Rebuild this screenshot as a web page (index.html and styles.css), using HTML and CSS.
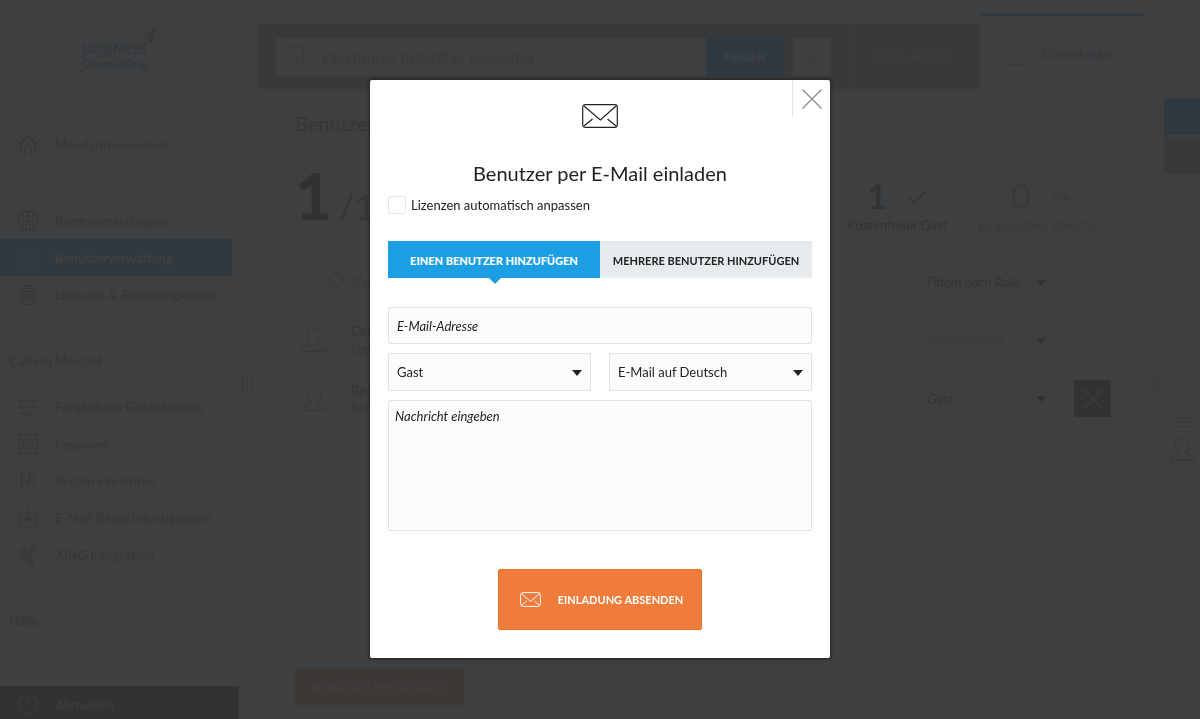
FILE: index.html
```html
<!DOCTYPE html>
<html lang="de">
<head>
    <meta charset="UTF-8">
    <meta name="viewport" content="width=device-width, initial-scale=1.0">
    <title>Benutzerverwaltung</title>
    <link rel="stylesheet" href="styles.css">
</head>
<body>
    <!-- Shared icons -->
    <svg class="sprite" width="0" height="0">
        <symbol id="user" viewBox="0 0 26 26">
            <path d="M10 16.500c-2-1.500-3.500-4.500-3.500-8C6.500 4 9 1.500 13 1.500S19.500 4 19.500 8.500c0 3.500-1.500 6.500-3.500 8 1 2 3.500 2.500 6 3.500 2 .8 3 2.200 2.500 3.500-1.500 1.200-21.500 1.200-23 0C1 22.200 2 20.800 4 20c2.500-1 5-1.500 6-3.500z"/>
        </symbol>
        <symbol id="cross" viewBox="0 0 20 20">
            <path d="M.5.5l19 19M19.500.5l-19 19"/>
        </symbol>
        <symbol id="mail" viewBox="0 0 36 24">
            <rect x=".7" y=".7" width="34.600" height="22.600" rx="2.500"/>
            <path d="M2 2l16.300 14L34 2M2 22l8.500-7M34 22l-8.500-7"/>
        </symbol>
        <symbol id="mail-small" viewBox="0 0 21 15">
            <rect x=".6" y=".6" width="19.800" height="13.800" rx="2.500"/>
            <path d="M2 2l8.500 7.500L19 2M2 13l4.500-4M19 13l-4.500-4"/>
        </symbol>
    </svg>

    <div class="page">
        <aside class="sidebar">
            <div class="logo">
                <svg class="logo-arrow" viewBox="0 0 82 48" width="82" height="48">
                    <path class="line" d="M1 45L26 26l27 8L72 10"/>
                    <path class="head" d="M79 1L66 7l5 2 3 6z"/>
                </svg>
                <span>BUSINESS</span>
                <span>Consulting</span>
            </div>

            <nav class="menu menu-wide">
                <a href="#"><svg viewBox="0 0 20 20"><path d="M.5 9.500L10 1l9.500 8.500M3 8v11h4v-8h6v8h4V8"/></svg>Mandantenwechsel</a>
            </nav>

            <nav class="menu">
                <a href="#"><svg viewBox="0 0 20 20"><path d="M.7.700h18.600v18.600H.7zM1 10h18M8 19v-6h4v6"/><path class="thick" d="M4.500 3v4M10 3v4M15.500 3v4M4.500 12.500v4M15.500 12.500v4"/></svg>Kontoeinstellungen</a>
                <a href="#" class="active"><svg><use href="#user"/></svg>Benutzerverwaltung</a>
                <a href="#"><svg viewBox="0 0 20 20"><rect x="4" y=".7" width="12" height="18.600" rx="1.500"/><path d="M4 6.500h12M6 3.500h8M7 9h6v7H7zM10 9v7"/></svg>Lizenzen &amp; Rechnungsdaten</a>
            </nav>

            <h2>Cathrin Mentzel</h2>

            <nav class="menu">
                <a href="#"><svg viewBox="0 0 20 20"><path d="M0 4h12M16 4h4M0 10h3M7 10h13M0 16h7M12 16h8"/><circle cx="14" cy="4" r="2"/><circle cx="5" cy="10" r="2"/><circle cx="9.500" cy="16" r="2"/></svg>Persönliche Einstellungen</a>
                <a href="#"><svg viewBox="0 0 20 20"><path d="M.7.700h18.600v18.600H.7zM17 4v3M17 9v3M17 14v3"/><circle cx="9.500" cy="10" r="5"/><circle cx="9.500" cy="10" r="2"/><path d="M4 10h4"/></svg>Passwort</a>
                <a href="#"><svg viewBox="0 0 20 20"><path d="M3.500 20V1h8v10h-8M11.500 3H16v10H9.500l-1-2"/></svg>Regeln einrichten</a>
                <a href="#"><svg viewBox="0 0 20 20"><path d="M8 5H2.500Q.7 5 .7 7v10q0 2 2 2h14.600q2 0 2-2V7q0-2-2-2H12M10 0v11M7.500 9l2.500 2.500L12.500 9M2 6l8 7 8-7M2 18l5-5M18 18l-5-5"/></svg>E-Mail Benachrichtigungen</a>
                <a href="#"><svg viewBox="0 0 20 20"><path d="M3 4h3.500l2 4-4 6H1.500l3.500-6zM14.500 1H18l-6.500 11 4 7.500H12L8 12z"/></svg>XING Integration</a>
            </nav>

            <h2>Hilfe</h2>

            <a href="#" class="logout"><svg viewBox="0 0 20 20"><path d="M10 0v12M6.500 1.500a9.200 9.200 0 1 0 7 0"/></svg>Abmelden</a>
        </aside>

        <div class="handle"></div>

        <main class="main">
            <header class="topbar">
                <form class="search">
                    <label class="search-field">
                        <svg viewBox="0 0 14 22" width="14" height="22"><path d="M.7.700h12.600v20L7 15.500l-6.300 5z"/></svg>
                        <input type="text" placeholder="Durchsuche BUSINESS Consulting" aria-label="Suche">
                    </label>
                    <button type="button" class="find">FINDEN</button>
                    <button type="button" class="filter" aria-label="Filter"><svg viewBox="0 0 20 20" width="20" height="20"><path d="M1 1h18l-7 8v7l-4 3.500V9z"/></svg></button>
                </form>
                <a href="#" class="import"><svg viewBox="0 0 26 22" width="26" height="22"><path d="M10 16H5.500a4.500 4.500 0 0 1-.5-9 4 4 0 0 1 3.500-2.500A6.500 6.500 0 0 1 20 6.500 5 5 0 0 1 20.500 16H16M13 22V9M10 12l3-3.500 3 3.500"/></svg>Import</a>
                <a href="#" class="settings"><svg width="24" height="24"><use href="#user"/></svg>Einstellungen</a>
            </header>

            <section class="content">
                <h1>Benutzerverwaltung</h1>

                <div class="stats">
                    <div class="licenses"><strong>1</strong><span>/10</span></div>
                    <div class="stat">
                        <div class="stat-value"><b>1</b><svg viewBox="0 0 20 20" width="20" height="20"><path d="M1 11l6 6L19 5"/></svg></div>
                        Kostenfreier Gast
                    </div>
                    <div class="stat stat-light">
                        <div class="stat-value"><span>0</span><svg viewBox="0 0 20 20" width="20" height="20"><path d="M8 3L1 9l7 6v-4c5-.5 8 2 11 6 0-6-5-10-11-10z"/></svg></div>
                        Eingeladene Benutzer
                    </div>
                </div>

                <div class="row row-filter">
                    <label class="user-search">
                        <svg viewBox="0 0 20 20" width="20" height="20"><circle cx="12.500" cy="7.500" r="6.500"/><path d="M8 12l-7.500 7.500"/></svg>
                        <input type="text" placeholder="Nach Benutzer suchen" aria-label="Benutzer suchen">
                    </label>
                    <div class="dropdown dim-dropdown">
                        <select class="italic" aria-label="Rolle filtern"><option>Filtern nach Rolle</option></select>
                    </div>
                </div>

                <div class="row">
                    <svg class="avatar"><use href="#user"/></svg>
                    <div class="person"><b>Cathrin Mentzel</b><span>cathrin.mentzel</span></div>
                    <div class="dropdown dim-dropdown locked">
                        <select aria-label="Rolle"><option>Administrator</option></select>
                    </div>
                </div>

                <div class="row row-last">
                    <svg class="avatar"><use href="#user"/></svg>
                    <div class="person"><b>Benutzer</b><span>benutzer</span></div>
                    <div class="dropdown dim-dropdown">
                        <select aria-label="Rolle"><option>Gast</option></select>
                    </div>
                    <button type="button" class="remove" aria-label="Entfernen"><svg width="20" height="20"><use href="#cross"/></svg></button>
                </div>

                <footer class="content-footer">
                    <button type="button" class="add-user">BENUTZER HINZUFÜGEN</button>
                </footer>
            </section>
        </main>

        <div class="handle"></div>

        <aside class="rail">
            <div class="rail-box rail-blue"></div>
            <div class="rail-box rail-grey"></div>
            <div class="rail-handle"></div>
            <div class="rail-user"><svg width="26" height="26"><use href="#user"/></svg></div>
        </aside>
    </div>

    <div class="overlay">
        <form class="modal">
            <button type="button" class="close" aria-label="Schließen"><svg width="20" height="20"><use href="#cross"/></svg></button>
            <svg class="modal-icon" width="36" height="24"><use href="#mail"/></svg>
            <h2>Benutzer per E-Mail einladen</h2>
            <label class="check"><input type="checkbox">Lizenzen automatisch anpassen</label>

            <div class="tabs">
                <button type="button" class="tab tab-active">EINEN BENUTZER HINZUFÜGEN</button>
                <button type="button" class="tab">MEHRERE BENUTZER HINZUFÜGEN</button>
            </div>

            <div class="fields">
                <input class="field" type="email" placeholder="E-Mail-Adresse" aria-label="E-Mail-Adresse">
                <div class="field-row">
                    <div class="dropdown">
                        <select class="field" aria-label="Rolle"><option>Gast</option></select>
                    </div>
                    <div class="dropdown">
                        <select class="field" aria-label="Sprache"><option>E-Mail auf Deutsch</option></select>
                    </div>
                </div>
                <textarea class="field message" placeholder="Nachricht eingeben" aria-label="Nachricht"></textarea>
            </div>

            <button type="button" class="send"><svg width="21" height="15"><use href="#mail-small"/></svg>EINLADUNG ABSENDEN</button>
        </form>
    </div>
</body>
</html>
```
FILE: styles.css
```css
* {
    box-sizing: border-box;
}

body {
    margin: 0;
    font-family: Lato, "Liberation Sans", sans-serif;
    font-size: 13px;
    line-height: 18px;
    color: #222;
    background: #f0f0f0;
    overflow: hidden;
}

h1,
h2 {
    margin: 0;
    font-weight: normal;
}

a {
    color: inherit;
    text-decoration: none;
}

button,
input,
select,
textarea {
    font: inherit;
    color: inherit;
    border: none;
    border-radius: 0;
    background: none;
    padding: 0;
    margin: 0;
}

button {
    cursor: pointer;
}

svg {
    fill: none;
    stroke: currentColor;
    stroke-width: 1.2;
    flex-shrink: 0;
}

.sprite {
    position: absolute;
}

.page {
    display: flex;
    height: 100vh;
}

/* Sidebar */
.sidebar {
    display: flex;
    flex-direction: column;
    width: 239px;
    color: #888;
}

.logo {
    position: relative;
    display: flex;
    flex-direction: column;
    height: 126px;
    padding: 41px 0 0 82px;
    font-size: 14px;
    line-height: 15px;
    color: #4a8c98;
}

.logo-arrow {
    position: absolute;
    left: 77px;
    top: 28px;
    color: #888;
}

.logo-arrow .head {
    fill: currentColor;
}

.menu {
    width: 232px;
    background: #fff;
}

.menu-wide {
    width: auto;
    margin-bottom: 39px;
}

.menu a,
.logout {
    display: flex;
    align-items: center;
    gap: 17px;
    height: 37px;
    padding-left: 18px;
    font-weight: bold;
}

.menu svg,
.logout svg {
    width: 20px;
    height: 20px;
    color: #666;
}

.menu .thick {
    stroke-width: 2.5;
}

.menu .active {
    background: #1c9fe2;
    color: #fff;
}

.menu .active svg {
    color: #ccc;
}

.sidebar h2 {
    padding: 39px 9px 18px;
    font-size: 13px;
    font-weight: bold;
}

.logout {
    height: 33px;
    margin-top: auto;
    padding-top: 4px;
    background: #222;
    color: #aaa;
}

.logout svg {
    color: #aaa;
}

/* Drag handles between the columns */
.handle {
    width: 19px;
    height: 26px;
    margin-top: 370px;
    background: repeating-linear-gradient(to right, #aaa 0 1px, transparent 1px 4px) 4px 0 / 9px 100% no-repeat;
}

/* Main column */
.main {
    display: flex;
    flex-direction: column;
    flex: 1;
    padding-top: 14px;
}

.topbar {
    display: flex;
    align-items: flex-end;
    height: 75px;
}

.search {
    display: flex;
    flex: 1;
    height: 65px;
    padding: 14px 19px 13px 18px;
    background: #949698;
}

.search-field {
    display: flex;
    align-items: center;
    flex: 1;
    gap: 19px;
    padding-left: 14px;
    background: #fff;
    color: #999;
}

.search-field input {
    flex: 1;
    min-width: 0;
    font-size: 15px;
}

input::placeholder,
textarea::placeholder {
    color: inherit;
    font-style: italic;
    opacity: 1;
}

.find {
    width: 78px;
    background: #1c9fe2;
    color: #fff;
    font-size: 11px;
    font-weight: bold;
}

.filter {
    display: flex;
    align-items: center;
    justify-content: center;
    width: 38px;
    margin-left: 9px;
    background: #fff;
    color: #999;
}

.import {
    display: flex;
    align-items: center;
    gap: 9px;
    width: 129px;
    height: 65px;
    margin-left: 1px;
    padding-left: 24px;
    background: #949698;
    color: #ddd;
    font-weight: bold;
}

.settings {
    display: flex;
    align-items: center;
    gap: 13px;
    width: 165px;
    height: 75px;
    padding: 3px 0 0 24px;
    border-top: 2px solid #1c9fe2;
    background: #fff;
    color: #888;
}

.content {
    display: flex;
    flex-direction: column;
    flex: 1;
    padding: 0 13px 14px 18px;
    background: #fff;
}

.content h1 {
    padding: 22px 19px 18px;
    border-bottom: 1px solid #eee;
    font-size: 20px;
    line-height: 24px;
    color: #666;
}

.stats {
    display: flex;
    height: 94px;
    padding-right: 29px;
}

.licenses {
    flex: 1;
    padding: 10px 19px;
    font-size: 36px;
    line-height: 64px;
    color: #666;
}

.licenses strong {
    margin-right: 6px;
    font-size: 64px;
    font-weight: 900;
    color: #222;
}

.stat {
    margin-top: 22px;
    margin-left: 32px;
    text-align: center;
    color: #333;
}

.stat-light {
    color: #999;
}

.stat-value {
    display: flex;
    align-items: center;
    justify-content: center;
    gap: 20px;
    height: 40px;
    font-size: 34px;
}

.row {
    display: flex;
    align-items: center;
    height: 57px;
    padding: 0 21px 0 25px;
    border-top: 1px solid #eee;
}

.row-filter {
    height: 63px;
    padding-top: 4px;
    padding-left: 37px;
}

.row-last {
    height: 60px;
}

.user-search {
    display: flex;
    align-items: center;
    gap: 8px;
    width: 300px;
    height: 37px;
    padding-left: 10px;
    border: 1px solid #eee;
    color: #888;
}

.avatar {
    width: 26px;
    height: 26px;
    margin-right: 24px;
    color: #888;
}

.person {
    display: flex;
    flex-direction: column;
    color: #666;
}

.dropdown {
    position: relative;
    flex: 1;
}

.dropdown select {
    width: 100%;
    appearance: none;
    cursor: pointer;
}

.dropdown::after {
    content: "";
    position: absolute;
    right: 9px;
    top: 17px;
    border: 5px solid transparent;
    border-top: 6px solid #222;
    border-bottom: none;
    pointer-events: none;
}

.dim-dropdown {
    flex: none;
    width: 137px;
    height: 37px;
    margin-left: auto;
    margin-right: 55px;
    border: 1px solid #eee;
    color: #444;
}

.dim-dropdown::after {
    top: 15px;
}

.dim-dropdown select {
    height: 35px;
    padding-left: 7px;
}

.locked {
    border-color: transparent;
    color: #999;
}

.italic {
    font-style: italic;
}

.remove {
    display: flex;
    align-items: center;
    justify-content: center;
    width: 37px;
    height: 37px;
    margin-left: -37px;
    border-radius: 2px;
    background: #222;
    color: #ccc;
}

.content-footer {
    margin-top: auto;
    padding: 10px 19px 0;
    border-top: 1px solid #eee;
}

.add-user {
    width: 169px;
    height: 37px;
    background: #ef7b3b;
    color: #ddd;
    font-size: 11px;
    font-weight: bold;
}

/* Right rail */
.rail {
    width: 36px;
    padding-top: 98px;
}

.rail-box {
    height: 37px;
    margin-bottom: 2px;
}

.rail-blue {
    background: #1c9fe2;
}

.rail-grey {
    background: #949698;
}

.rail-handle {
    height: 9px;
    margin: 244px 4px 3px 6px;
    background: repeating-linear-gradient(#999 0 1px, transparent 1px 4px);
}

.rail-user {
    display: flex;
    align-items: center;
    justify-content: center;
    height: 37px;
    background: #fff;
    color: #777;
}

/* Invite dialog */
.overlay {
    position: fixed;
    inset: 0;
    display: flex;
    align-items: flex-start;
    justify-content: center;
    padding-top: 80px;
    background: rgba(50, 51, 53, 0.94);
}

.modal {
    position: relative;
    display: flex;
    flex-direction: column;
    width: 460px;
    padding: 24px 18px 28px;
    border-radius: 2px;
    background: #fff;
    box-shadow: 0 0 3px 1px #222;
}

.close {
    position: absolute;
    top: 0;
    right: 0;
    display: flex;
    align-items: center;
    justify-content: center;
    width: 38px;
    height: 37px;
    border-left: 1px solid #e3e7ea;
    color: #888;
}

.modal-icon,
.send {
    align-self: center;
}

.modal h2 {
    margin-top: 33px;
    text-align: center;
    font-size: 20px;
    line-height: 24px;
}

.check {
    display: flex;
    align-items: center;
    gap: 5px;
    margin-top: 11px;
}

.check input {
    width: 18px;
    height: 18px;
    appearance: none;
    border: 1px solid #dfe5e8;
    border-radius: 2px;
}

.tabs {
    display: flex;
    margin-top: 27px;
}

.tab {
    flex: 1;
    height: 37px;
    padding-top: 2px;
    background: #e7ebee;
    font-size: 11px;
    font-weight: bold;
    white-space: nowrap;
}

.tab-active {
    position: relative;
    background: #1c9fe2;
    color: #fff;
    font-weight: 900;
}

.tab-active::after {
    content: "";
    position: absolute;
    left: 50%;
    top: 100%;
    margin-left: -5px;
    border: 6px solid transparent;
    border-top-color: #1c9fe2;
    border-bottom: none;
}

.fields {
    display: flex;
    flex-direction: column;
    gap: 9px;
    margin-top: 29px;
}

.field {
    width: 100%;
    height: 37px;
    padding: 0 8px;
    border: 1px solid #dfe3e6;
    border-radius: 2px;
    background: #fcfcfc;
}

.field-row {
    display: flex;
    gap: 18px;
}

.field-row .field {
    display: block;
    height: 38px;
}

.message {
    height: 131px;
    padding: 6px;
    resize: none;
}

.send {
    display: flex;
    align-items: center;
    gap: 17px;
    height: 61px;
    margin-top: 38px;
    padding: 0 18px 0 21px;
    border: 1px solid #ee712b;
    border-radius: 2px;
    background: #ef7c3c;
    color: #fff;
    font-size: 11px;
    font-weight: bold;
}

.send svg {
    stroke-width: 1;
}
```
